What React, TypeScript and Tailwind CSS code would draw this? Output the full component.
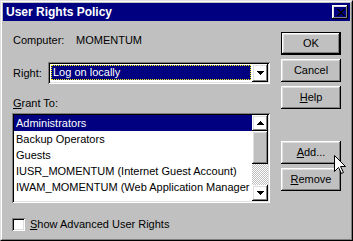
import React from "react";

const raised =
  "shadow-[inset_-1px_-1px_0_#000,inset_1px_1px_0_#fff,inset_-2px_-2px_0_#808080,inset_2px_2px_0_#dfdfdf]";
const sunken =
  "shadow-[inset_1px_1px_0_#808080,inset_-1px_-1px_0_#fff,inset_2px_2px_0_#000,inset_-2px_-2px_0_#dfdfdf]";

const xRows = ["11000011", "01100110", "00111100", "00011000", "00111100", "01100110", "11000011"];

function CloseGlyph() {
  return (
    <svg width="8" height="7" viewBox="0 0 8 7" shapeRendering="crispEdges">
      {xRows.map((r, y) =>
        r.split("").map((c, x) => (c === "1" ? <rect key={`${x}-${y}`} x={x} y={y} width="1" height="1" fill="#000" /> : null))
      )}
    </svg>
  );
}

function Tri({ up }: { up?: boolean }) {
  const rows = [1, 3, 5, 7];
  const order = up ? rows : [...rows].reverse();
  return (
    <svg width="7" height="4" viewBox="0 0 7 4" shapeRendering="crispEdges">
      {order.map((w, i) => (
        <rect key={i} x={(7 - w) / 2} y={i} width={w} height="1" fill="#000" />
      ))}
    </svg>
  );
}

function Btn({ children, def }: { children: React.ReactNode; def?: boolean }) {
  if (def)
    return (
      <div className="w-[60px] h-[23px] border border-black">
        <div className={`h-full flex items-center justify-center ${raised}`}>{children}</div>
      </div>
    );
  return <div className={`w-[60px] h-[23px] flex items-center justify-center ${raised}`}>{children}</div>;
}

const grantees = [
  "Administrators",
  "Backup Operators",
  "Guests",
  "IUSR_MOMENTUM (Internet Guest Account)",
  "IWAM_MOMENTUM (Web Application Manager account)",
];

export default function App() {
  return (
    <div className="relative w-[353px] h-[241px] bg-[#c0c0c0] border border-t-[#dfdfdf] border-l-[#dfdfdf] border-r-black border-b-black font-['Liberation_Sans',Arial,sans-serif] text-[11px] text-black select-none">
      <div className="h-full border border-t-white border-l-white border-r-[#808080] border-b-[#808080] p-[1px] flex flex-col">
        {/* title bar */}
        <div className="h-[18px] flex-shrink-0 bg-[#000080] flex items-center justify-between pl-[3px] pr-[2px]">
          <span className="text-white font-bold text-[12px] leading-[18px]">User Rights Policy</span>
          <div className={`w-[16px] h-[14px] flex items-center justify-center pl-[1px] ${raised}`}>
            <CloseGlyph />
          </div>
        </div>

        {/* body */}
        <div className="flex-1 flex pl-[9px]">
          <div className="w-[258px] flex flex-col">
            <div className="mt-[13px] h-[13px] leading-[13px] pl-[1px] flex">
              <span className="w-[63px]">Computer:</span>
              <span>MOMENTUM</span>
            </div>

            <div className="mt-[15px] flex items-center">
              <span className="w-[36px] pl-[1px]">
                Ri<span className="underline">g</span>ht:
              </span>
              <div className={`w-[222px] h-[22px] p-[2px] bg-white flex ${sunken}`}>
                <div className="flex-1 pl-[1px] pt-[1px] pb-[2px] pr-[1px]">
                  <div className="h-full bg-[#000080] border border-dotted border-[#ffff00] text-white leading-[13px] pl-[1px]">
                    Log on locally
                  </div>
                </div>
                <div className={`w-[16px] h-full flex items-center justify-center ${raised}`}>
                  <Tri />
                </div>
              </div>
            </div>

            <div className="mt-[13px] h-[13px] leading-[13px] pl-[1px]">
              <span className="underline">G</span>rant To:
            </div>

            <div className={`mt-[3px] h-[90px] p-[2px] bg-white flex ${sunken}`}>
              <div className="flex-1 min-w-0 overflow-hidden flex flex-col">
                {grantees.map((g, i) => (
                  <div
                    key={g}
                    className={`h-[16px] flex-shrink-0 leading-[16px] pl-[2px] whitespace-nowrap ${
                      i === 0 ? "bg-[#000080] text-white" : ""
                    }`}
                  >
                    {g}
                  </div>
                ))}
              </div>
              <div className="w-[16px] flex flex-col">
                <div className={`h-[16px] flex items-center justify-center ${raised}`}>
                  <Tri up />
                </div>
                <div className={`h-[33px] bg-[#c0c0c0] ${raised}`} />
                <div className="flex-1 bg-[repeating-conic-gradient(#c0c0c0_0%_25%,#ffffff_0%_50%)] bg-[length:2px_2px]" />
                <div className={`h-[16px] flex items-center justify-center ${raised}`}>
                  <Tri />
                </div>
              </div>
            </div>

            <div className="mt-[15px] h-[13px] flex items-center">
              <div className={`w-[13px] h-[13px] bg-white ${sunken}`} />
              <span className="ml-[5px] leading-[13px]">
                <span className="underline">S</span>how Advanced User Rights
              </span>
            </div>
          </div>

          <div className="ml-[11px] w-[60px] flex flex-col">
            <div className="mt-[11px]">
              <Btn def>OK</Btn>
            </div>
            <div className="mt-[4px]">
              <Btn>Cancel</Btn>
            </div>
            <div className="mt-[4px]">
              <Btn>
                <span>
                  <span className="underline">H</span>elp
                </span>
              </Btn>
            </div>
            <div className="mt-[32px]">
              <Btn>
                <span>
                  <span className="underline">A</span>dd...
                </span>
              </Btn>
            </div>
            <div className="mt-[4px]">
              <Btn>
                <span>
                  <span className="underline">R</span>emove
                </span>
              </Btn>
            </div>
          </div>
        </div>
      </div>

      {/* mouse pointer */}
      <svg
        className="absolute left-[332px] top-[153px]"
        width="13"
        height="21"
        viewBox="0 0 13 21"
        shapeRendering="crispEdges"
      >
        <path
          d="M1.5 1.5 L1.5 17.5 L5.5 13.5 L8.5 19.5 L10.5 18.5 L7.5 12.5 L12.5 12.5 Z"
          fill="#fff"
          stroke="#000"
          strokeWidth="1"
          shapeRendering="auto"
        />
      </svg>
    </div>
  );
}
